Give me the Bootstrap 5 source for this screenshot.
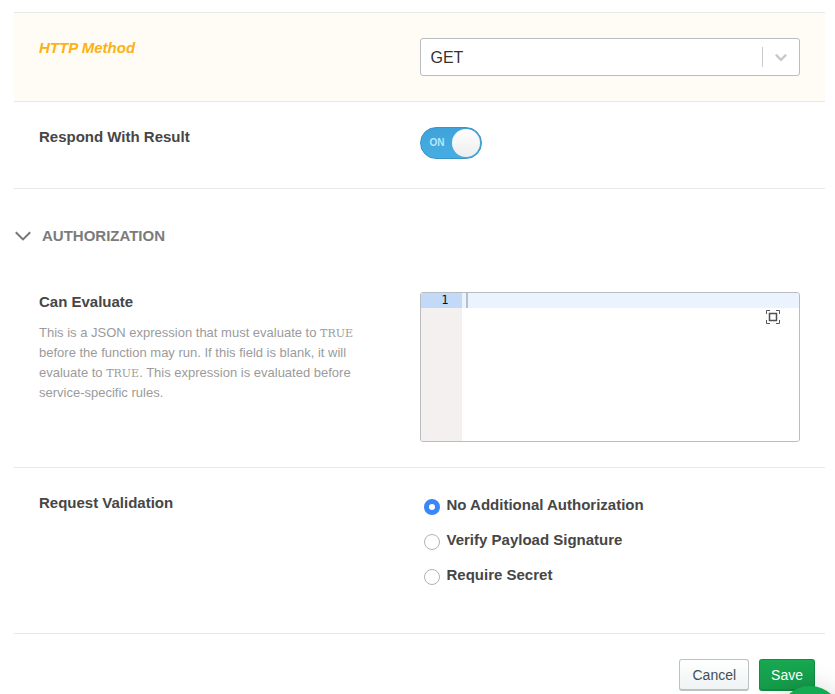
<!DOCTYPE html>
<html lang="en">
<head>
<meta charset="utf-8">
<meta name="viewport" content="width=device-width, initial-scale=1">
<title>Endpoint settings</title>
<link rel="stylesheet" href="https://cdn.jsdelivr.net/npm/bootstrap@5.3.0/dist/css/bootstrap.min.css">
<style>
body { font-family: "Liberation Sans", Arial, sans-serif; font-size: 15px; line-height: 20px; color: #464646; background: #fff; }
.settings { padding: 12px 10px 2px 14px; }
.setting { border-bottom: 1px solid #e7e9e9; padding: 25px; --bs-gutter-x: 0; margin: 0; }
.setting-changed { background: #fffcf5; border-top: 1px solid #e7e9e9; }
.setting-name { font-weight: 700; }
.setting-changed .setting-name { color: #fbb215; font-style: italic; }
.method-box { display: grid; height: 38px; }
.method-box > * { grid-area: 1 / 1; }
.method-select { appearance: none; width: 100%; border: 1px solid #b9bdbe; border-radius: 3px; background: #fff; color: #333; font-size: 16px; padding: 2px 50px 0 10px; }
.method-mark { justify-self: end; align-self: center; pointer-events: none; margin-right: 1px; z-index: 1; }
.toggle { position: relative; width: 62px; height: 32px; }
.toggle input { appearance: none; display: block; width: 62px; height: 32px; margin: 0; border: 1px solid #3a94c6; border-radius: 16px; background: linear-gradient(#3fa3d9, #46ade3); cursor: pointer; }
.toggle-text { position: absolute; left: 10px; top: 6px; font-size: 10px; font-weight: 700; color: #b5e7fb; pointer-events: none; }
.toggle-knob { position: absolute; right: 2px; top: 2px; width: 28px; height: 28px; border-radius: 50%; background: linear-gradient(#fff, #ededed); pointer-events: none; }
.section-toggle { font-weight: 700; font-size: 15px; color: #7b7b7b; background: none; border: 0; gap: 10px; margin: 37px 0 21px; }
.hint { font-size: 13px; line-height: 20px; color: #9b9b9b; max-width: 330px; margin: 11px 0 0; }
.hint code { font-family: "DejaVu Serif", serif; font-size: 11px; line-height: 12px; color: inherit; }
.code-editor { position: relative; height: 150px; border: 1px solid #b9bdbe; border-radius: 3px; overflow: hidden; }
.gutter { width: 41px; background: #f4f0f0; font: 12px/15px "DejaVu Sans Mono", monospace; color: #111; text-align: right; }
.gutter span { display: block; height: 15px; background: #c2daf8; padding-right: 13px; }
.code-input { border: 0; resize: none; outline: 0; padding: 0 5px; font: 12px/15px "DejaVu Sans Mono", monospace; background: linear-gradient(#eaf3fe 15px, #fff 15px); }
.caret { position: absolute; left: 45px; top: 0; width: 2px; height: 15px; background: #b6bfca; }
.expand { position: absolute; right: 19px; top: 17px; width: 14px; height: 14px; padding: 0; border: 0; background: none; display: flex; }
.choices { display: grid; gap: 15px; padding: 2px 0 23px 4px; }
.choice { display: flex; gap: 7px; font-weight: 700; }
.choice input { appearance: none; flex: none; width: 16px; height: 16px; margin: 4px 0 0; border: 1px solid #b3b3b3; border-radius: 50%; background: #fff; }
.choice input:checked { border: 5px solid #3c87f7; }
.actions { gap: 10px; padding: 25px 10px 0 0; }
.act { height: 32px; font-size: 14px; line-height: 18px; border-radius: 3px; }
.act-cancel { color: #424d56; border: 1px solid #b8c3c2; border-bottom-width: 2px; background: linear-gradient(#fff, #eff3f3); padding: 6px 12px 5px; }
.act-save { color: #fff; border: 1px solid #118c42; border-bottom-width: 2px; background: linear-gradient(#17a850, #159a49); padding: 6px 11px 5px; }
.help-bubble { position: fixed; right: -7px; bottom: -56px; width: 64px; height: 64px; border: 0; border-radius: 50%; background: #13aa52; box-shadow: 0 0 26px rgba(0, 0, 0, .16); }
</style>
</head>
<body>
<form class="settings">
  <div class="setting setting-changed row">
    <div class="col-6"><label class="setting-name d-block" for="method">HTTP Method</label></div>
    <div class="col-6">
      <div class="method-box">
        <select class="method-select" id="method"><option>GET</option><option>POST</option></select>
        <svg class="method-mark" width="37" height="20" viewBox="0 0 37 20" fill="none" aria-hidden="true"><path d="M.5 0v20" stroke="#c8cccc"/><path d="M14.500 8.300l4.500 4.500 4.500-4.500" stroke="#c6caca" stroke-width="2.400" stroke-linecap="round"/></svg>
      </div>
    </div>
  </div>
  <div class="setting row">
    <div class="col-6"><label class="setting-name d-block" for="respond">Respond With Result</label></div>
    <div class="col-6">
      <div class="toggle mb-1">
        <input type="checkbox" role="switch" id="respond" checked>
        <span class="toggle-text">ON</span><span class="toggle-knob"></span>
      </div>
    </div>
  </div>
  <button class="section-toggle d-flex align-items-center p-0" type="button" aria-expanded="true">
    <svg width="18" height="12" viewBox="0 0 18 12" fill="none" aria-hidden="true"><path d="M1.800 2.200L9 9.400l7.200-7.200" stroke="#777" stroke-width="2"/></svg>
    AUTHORIZATION
  </button>
  <div class="setting row">
    <div class="col-6">
      <label class="setting-name d-block" for="expression">Can Evaluate</label>
      <p class="hint">This is a JSON expression that must evaluate to <code>TRUE</code> before the function may run. If this field is blank, it will evaluate to <code>TRUE</code>. This expression is evaluated before service-specific rules.</p>
    </div>
    <div class="col-6">
      <div class="code-editor d-flex">
        <div class="gutter flex-shrink-0"><span>1</span></div>
        <textarea class="code-input flex-grow-1" id="expression" spellcheck="false"></textarea>
        <span class="caret"></span>
        <button class="expand" type="button" aria-label="Expand editor">
          <svg width="14" height="14" viewBox="0 0 14 14" fill="none"><path d="M.5 4V.5H4M10 .5h3.500V4M13.500 10v3.500H10M4 13.500H.5V10" stroke="#555"/><rect x="3.500" y="3.500" width="7" height="7" stroke="#4b4e52" stroke-width="1.500"/></svg>
        </button>
      </div>
    </div>
  </div>
  <div class="setting row" role="radiogroup" aria-labelledby="validation">
    <div class="col-6"><div class="setting-name" id="validation">Request Validation</div></div>
    <div class="col-6">
      <div class="choices">
        <label class="choice"><input type="radio" name="validation" checked>No Additional Authorization</label>
        <label class="choice"><input type="radio" name="validation">Verify Payload Signature</label>
        <label class="choice"><input type="radio" name="validation">Require Secret</label>
      </div>
    </div>
  </div>
  <div class="d-flex justify-content-end actions">
    <button class="act act-cancel" type="button">Cancel</button>
    <button class="act act-save" type="submit">Save</button>
  </div>
</form>
<button class="help-bubble" type="button" aria-label="Help"></button>
<script src="https://cdn.jsdelivr.net/npm/bootstrap@5.3.0/dist/js/bootstrap.bundle.min.js"></script>
</body>
</html>
